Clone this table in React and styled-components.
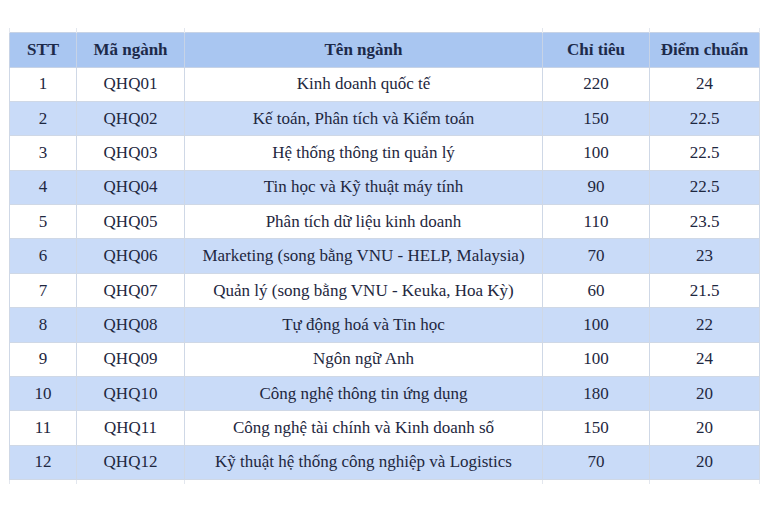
import styled, { createGlobalStyle } from "styled-components";

const GlobalStyle = createGlobalStyle`
  body {
    margin: 0;
    background: #fff;
    font-family: "Liberation Serif", "Times New Roman", serif;
  }
`;

const Page = styled.div`
  width: 768px;
  height: 512px;
  padding: 28px 0 0 9px;
  box-sizing: border-box;
  background: #fff;
`;

const Table = styled.table`
  border-collapse: collapse;
  table-layout: fixed;
  width: 750px;
  color: #1e2740;
  font-family: "Liberation Serif", "Times New Roman", serif;
  font-size: 17px;
`;

const Col = styled.col`
  width: ${(p) => p.$w}px;
`;

const Spacer = styled.tr`
  height: 4px;
  td {
    padding: 0;
    border-left: 1px solid #e3e7ee;
    border-right: 1px solid #e3e7ee;
  }
`;

const HeadRow = styled.tr`
  height: 35px;
  background: #a9c6f1;
`;

const Th = styled.th`
  font-family: "Liberation Serif", "Times New Roman", serif;
  font-weight: bold;
  text-align: center;
  padding: 0;
  border: 1px solid #c7d3e6;
  color: #1d2a4a;
`;

const Row = styled.tr`
  height: 34.4px;
  background: ${(p) => (p.$alt ? "#c9dbf8" : "#ffffff")};
`;

const Td = styled.td`
  font-family: "Liberation Serif", "Times New Roman", serif;
  text-align: center;
  padding: 0;
  border: 1px solid #cfd8e6;
  white-space: nowrap;
`;

const rows = [
  ["1", "QHQ01", "Kinh doanh quốc tế", "220", "24"],
  ["2", "QHQ02", "Kế toán, Phân tích và Kiểm toán", "150", "22.5"],
  ["3", "QHQ03", "Hệ thống thông tin quản lý", "100", "22.5"],
  ["4", "QHQ04", "Tin học và Kỹ thuật máy tính", "90", "22.5"],
  ["5", "QHQ05", "Phân tích dữ liệu kinh doanh", "110", "23.5"],
  ["6", "QHQ06", "Marketing (song bằng VNU - HELP, Malaysia)", "70", "23"],
  ["7", "QHQ07", "Quản lý (song bằng VNU - Keuka, Hoa Kỳ)", "60", "21.5"],
  ["8", "QHQ08", "Tự động hoá và Tin học", "100", "22"],
  ["9", "QHQ09", "Ngôn ngữ Anh", "100", "24"],
  ["10", "QHQ10", "Công nghệ thông tin ứng dụng", "180", "20"],
  ["11", "QHQ11", "Công nghệ tài chính và Kinh doanh số", "150", "20"],
  ["12", "QHQ12", "Kỹ thuật hệ thống công nghiệp và Logistics", "70", "20"],
];

const widths = [67, 108, 358, 107, 110];

export default function App() {
  return (
    <>
      <GlobalStyle />
      <Page>
        <Table>
          <colgroup>
            {widths.map((w, i) => (
              <Col key={i} $w={w} />
            ))}
          </colgroup>
          <tbody>
            <Spacer>
              {widths.map((w, i) => (
                <td key={i} />
              ))}
            </Spacer>
            <HeadRow>
              <Th>STT</Th>
              <Th>Mã ngành</Th>
              <Th>Tên ngành</Th>
              <Th>Chỉ tiêu</Th>
              <Th>Điểm chuẩn</Th>
            </HeadRow>
            {rows.map((r, i) => (
              <Row key={r[0]} $alt={i % 2 === 1}>
                {r.map((c, j) => (
                  <Td key={j}>{c}</Td>
                ))}
              </Row>
            ))}
            <Spacer>
              {widths.map((w, i) => (
                <td key={i} />
              ))}
            </Spacer>
          </tbody>
        </Table>
      </Page>
    </>
  );
}
